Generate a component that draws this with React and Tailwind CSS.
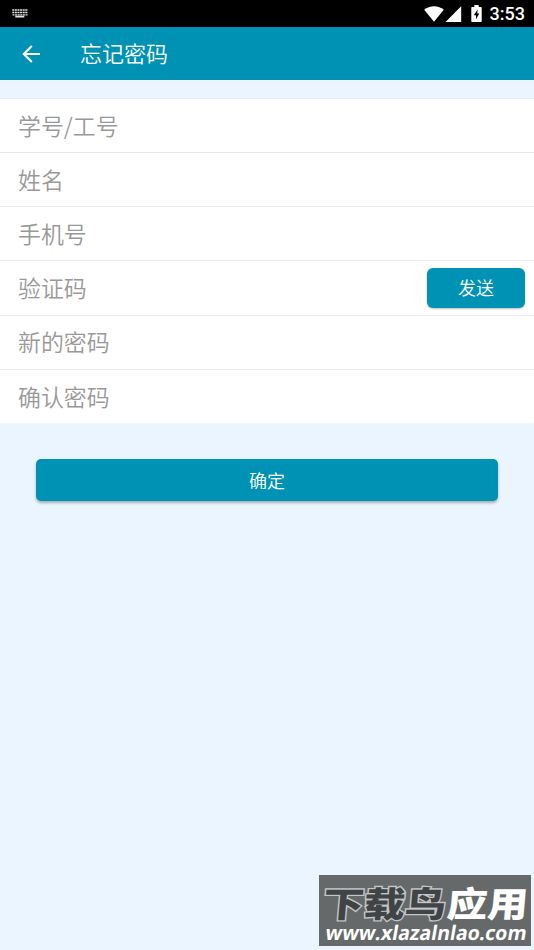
import { useState } from "react";

const fields = [
  { name: "account", label: "学号/工号", type: "text" },
  { name: "realName", label: "姓名", type: "text" },
  { name: "phone", label: "手机号", type: "tel" },
  { name: "code", label: "验证码", type: "text", hasSend: true },
  { name: "password", label: "新的密码", type: "password" },
  { name: "confirm", label: "确认密码", type: "password" },
];

function StatusBar() {
  return (
    <div className="flex h-[27px] items-center justify-between bg-black pl-3 pr-[9px] text-white">
      <svg width="16" height="9" viewBox="0 0 16 9" fill="none" stroke="#e4e4e4">
        <path d="M0.3 1H16M0.3 3.6H16" strokeWidth="1.5" strokeDasharray="2 0.6" />
        <path d="M0.5 5.8H15.5" strokeWidth="1.2" strokeDasharray="2 0.6" />
        <path d="M3.3 7.6H12.3" strokeWidth="1.8" />
      </svg>

      <div className="flex items-center">
        <svg width="20" height="16" viewBox="0 0 20 16" fill="white">
          <path d="M10 15.8L0.2 3.8C2.9 1.5 6.3 0.3 10 0.3S17.1 1.5 19.8 3.8Z" />
        </svg>
        <svg className="ml-[1px]" width="17" height="16" viewBox="0 0 17 16" fill="white">
          <path d="M0.5 16L16.2 0.3V16Z" />
        </svg>
        <svg className="ml-[9px]" width="11" height="17" viewBox="0 0 11 17">
          <path d="M3.3 0H7.7V2H10Q10.7 2 10.7 2.7V16.2Q10.7 17 10 17H1Q0.3 17 0.3 16.2V2.7Q0.3 2 1 2H3.3Z" fill="white" />
          <path d="M6.6 4.4L2.8 10.2H5V14.2L8.3 8.6H6.3Z" fill="black" />
        </svg>
        <span className="ml-[8px] font-[Roboto,sans-serif] text-[18px] font-medium leading-[27px]">
          3:53
        </span>
      </div>
    </div>
  );
}

function Watermark() {
  return (
    <div className="absolute bottom-[4px] right-[3px] h-[71px] w-[212px] bg-[#66696a]">
      <svg className="overflow-visible" width="212" height="71" viewBox="0 0 212 71">
        <g
          fontFamily="'Noto Sans CJK SC', sans-serif"
          fontSize="35"
          fontWeight="900"
          transform="translate(3 41.5) skewX(-5)"
        >
          <text
            textLength="123"
            lengthAdjust="spacingAndGlyphs"
            fill="#414446"
            stroke="#c3c5c6"
            strokeWidth="2.6"
            paintOrder="stroke"
          >
            下载鸟
          </text>
          <text x="124" textLength="81" lengthAdjust="spacingAndGlyphs" fill="white">
            应用
          </text>
        </g>
        <text
          transform="translate(5.5 64.5) skewX(-10)"
          fontFamily="'Open Sans', sans-serif"
          fontSize="20"
          fontWeight="700"
          textLength="201"
          lengthAdjust="spacingAndGlyphs"
          fill="white"
        >
          www.xlazalnlao.com
        </text>
      </svg>
    </div>
  );
}

function App() {
  const [form, setForm] = useState({});

  const handleChange = (e) => {
    setForm({ ...form, [e.target.name]: e.target.value });
  };

  return (
    <div className="relative h-[950px] w-full overflow-hidden bg-[#eaf5ff] font-['Noto_Sans_CJK_SC',sans-serif] font-[350]">
      <StatusBar />

      <header className="flex h-[53px] items-center bg-[#0092b5] pl-[22px] text-white">
        <button type="button" aria-label="返回">
          <svg width="19" height="18" viewBox="0 0 19 18" fill="none" stroke="white" strokeWidth="2.1">
            <path d="M18 9H2M9.8 1L1.8 9L9.8 17" />
          </svg>
        </button>
        <h1 className="ml-[39px] pb-[3px] text-[22px] leading-none">忘记密码</h1>
      </header>

      <form onSubmit={(e) => e.preventDefault()} className="mt-[18px]">
        <div className="bg-white">
          {fields.map((field) => (
            <div
              key={field.name}
              className="flex h-[54.15px] items-center border-t border-[#e6ebee] pl-[18px] pr-[9px]"
            >
              <input
                name={field.name}
                type={field.type}
                placeholder={field.label}
                value={form[field.name] || ""}
                onChange={handleChange}
                className="h-full min-w-0 flex-1 bg-transparent pb-[1.5px] text-[22.9px] text-gray-700 outline-none placeholder:text-[#999999]"
              />
              {field.hasSend && (
                <button
                  type="button"
                  className="h-10 w-[98px] rounded-[6px] bg-[#0092b5] pb-px text-[18px] leading-none text-white shadow-[0_1px_2px_rgba(0,0,0,0.25)]"
                >
                  发送
                </button>
              )}
            </div>
          ))}
        </div>

        <div className="mt-9 px-9">
          <button
            type="submit"
            className="h-[42px] w-full rounded-[5px] bg-[#0092b5] text-[18px] leading-none text-white shadow-[0_2px_3px_rgba(0,0,0,0.3)]"
          >
            确定
          </button>
        </div>
      </form>

      <Watermark />
    </div>
  );
}

export default App;
